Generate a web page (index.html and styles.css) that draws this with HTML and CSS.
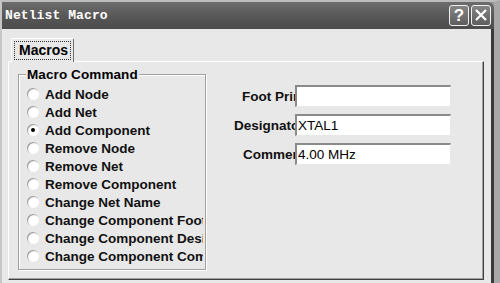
FILE: index.html
```html
<!doctype html>
<html>
<head>
  <meta charset="utf-8"/>
  <title>Netlist Macro</title>
  <link rel="stylesheet" href="styles.css">
</head>
<body>
  <div class="window">
    <div class="titlebar">
      <span class="title">Netlist Macro</span>
      <div class="caption-btns">
        <span class="cbtn">?</span>
        <span class="cbtn close">
          <svg width="14" height="14" viewBox="0 0 14 14"><path d="M2 2 L12 12 M12 2 L2 12" stroke="#fff" stroke-width="2.2" fill="none"/></svg>
        </span>
      </div>
    </div>
    <div class="client">
      <div class="tabs">
        <div class="tab"><span class="focus">Macros</span></div>
      </div>
      <div class="page">
        <div class="group">
          <span class="group-label">Macro Command</span>
          <div class="group-body">
            <div class="radio"><span class="dot"></span><span class="rtext">Add Node</span></div>
            <div class="radio"><span class="dot"></span><span class="rtext">Add Net</span></div>
            <div class="radio"><span class="dot checked"></span><span class="rtext">Add Component</span></div>
            <div class="radio"><span class="dot"></span><span class="rtext">Remove Node</span></div>
            <div class="radio"><span class="dot"></span><span class="rtext">Remove Net</span></div>
            <div class="radio"><span class="dot"></span><span class="rtext">Remove Component</span></div>
            <div class="radio"><span class="dot"></span><span class="rtext">Change Net Name</span></div>
            <div class="radio"><span class="dot"></span><span class="rtext">Change Component Footprint</span></div>
            <div class="radio"><span class="dot"></span><span class="rtext">Change Component Designator</span></div>
            <div class="radio"><span class="dot"></span><span class="rtext">Change Component Comment</span></div>
          </div>
        </div>
        <div class="fields">
          <div class="field">
            <span class="flabel foot">Foot Print</span>
            <div class="input"></div>
          </div>
          <div class="field">
            <span class="flabel desig">Designator</span>
            <div class="input">XTAL1</div>
          </div>
          <div class="field">
            <span class="flabel comm">Comment</span>
            <div class="input">4.00 MHz</div>
          </div>
        </div>
      </div>
    </div>
  </div>
</body>
</html>
```
FILE: styles.css
```css
html, body {
  margin: 0;
  padding: 0;
  width: 500px;
  height: 283px;
  overflow: hidden;
  background: #e8e8e8;
}
.window {
  width: 500px;
  height: 283px;
  box-sizing: border-box;
  display: flex;
  flex-direction: column;
  background: #9a9a9a;
  border-top: 2px solid #bdbdbd;
  border-left: 2px solid #c6c6c6;
  border-right: 6px solid #a8a8a8;
  font-family: "Liberation Sans", Arial, sans-serif;
}
.titlebar {
  height: 27px;
  flex: none;
  display: flex;
  align-items: center;
  justify-content: space-between;
  background: linear-gradient(#6c6c6c, #555 60%, #4c4c4c);
  border-top-right-radius: 6px;
  padding: 0 3px 0 3px;
}
.title {
  font-family: "Liberation Mono", "DejaVu Sans Mono", monospace;
  font-weight: bold;
  font-size: 13px;
  color: #fff;
  letter-spacing: 0.1px;
  margin-top: -1px;
}
.caption-btns {
  display: flex;
  gap: 2px;
  margin-top: -1px;
}
.cbtn {
  width: 18px;
  height: 19px;
  border: 1px solid #f0f0f0;
  border-radius: 3px;
  background: linear-gradient(#858585, #5e5e5e);
  color: #fff;
  font-weight: bold;
  font-size: 17px;
  line-height: 19px;
  text-align: center;
  display: flex;
  align-items: center;
  justify-content: center;
}
.client {
  flex: 1;
  background: #e8e8e8;
  padding: 9px 7px 0 6px;
  border-right: 3px solid #3a3a3a;
  display: flex;
  flex-direction: column;
}
.tabs {
  display: flex;
  padding-left: 3px;
}
.tab {
  padding: 2px 2px 0 2px;
  border-top: 1px solid #fff;
  border-left: 1px solid #fff;
  border-right: 1px solid #707070;
  border-top-left-radius: 2px;
  border-top-right-radius: 2px;
  box-sizing: border-box;
  height: 24px;
  margin-bottom: -1px;
  background: #e8e8e8;
  position: relative;
  z-index: 1;
}
.focus {
  display: block;
  border: 1px dotted #333;
  padding: 1px 2px 1px 4px;
  font-weight: bold;
  font-size: 14px;
  line-height: 15px;
  color: #000;
}
.page {
  height: 219px;
  box-sizing: border-box;
  border-top: 1px solid #fff;
  border-left: 1px solid #fff;
  border-right: 1px solid #404040;
  border-bottom: 1px solid #404040;
  box-shadow: inset -1px -1px 0 #a0a0a0;
  display: flex;
  padding: 12px 0 0 9px;
}
.group {
  position: relative;
  width: 188px;
  height: 196px;
  box-sizing: border-box;
  border: 1px solid #a0a0a0;
  box-shadow: 1px 1px 0 #fff, inset 1px 1px 0 #fff;
  padding: 10px 2px 0 8px;
}
.group-body {
  overflow: hidden;
}
.group-label {
  position: absolute;
  left: 7px;
  top: -8px;
  background: #e8e8e8;
  padding: 0 1px;
  font-weight: bold;
  font-size: 13.5px;
  line-height: 15px;
  letter-spacing: 0.1px;
  color: #000;
}
.radio {
  height: 18px;
  display: flex;
  align-items: center;
  white-space: nowrap;
}
.dot {
  flex: none;
  width: 12px;
  height: 12px;
  box-sizing: border-box;
  border-radius: 50%;
  background: radial-gradient(circle at 60% 60%, #fff 45%, #f4f4f4 60%, #d8d8d8 100%);
  box-shadow: inset 1px 1px 0 #a0a0a0;
  position: relative;
}
.dot.checked::after {
  content: "";
  position: absolute;
  left: 4px;
  top: 4px;
  width: 4px;
  height: 4px;
  border-radius: 50%;
  background: #000;
}
.rtext {
  margin-left: 6px;
  font-weight: bold;
  font-size: 13.5px;
  color: #111;
}
.fields {
  margin-left: 26px;
  padding-top: 11px;
  display: flex;
  flex-direction: column;
  gap: 7px;
}
.field {
  display: flex;
  align-items: center;
  height: 22px;
}
.flabel {
  width: 63px;
  overflow: hidden;
  white-space: nowrap;
  font-weight: bold;
  font-size: 13.5px;
  color: #111;
}
.flabel.foot { text-indent: 10px; }
.flabel.desig { text-indent: 2px; }
.flabel.comm { text-indent: 11px; }
.input {
  width: 156px;
  height: 22px;
  box-sizing: border-box;
  background: #fff;
  border-top: 2px solid #8a8a8a;
  border-left: 2px solid #8a8a8a;
  border-right: 1px solid #e8e8e8;
  border-bottom: 1px solid #e8e8e8;
  padding-left: 1px;
  font-size: 13.5px;
  line-height: 19px;
  color: #000;
}
```
